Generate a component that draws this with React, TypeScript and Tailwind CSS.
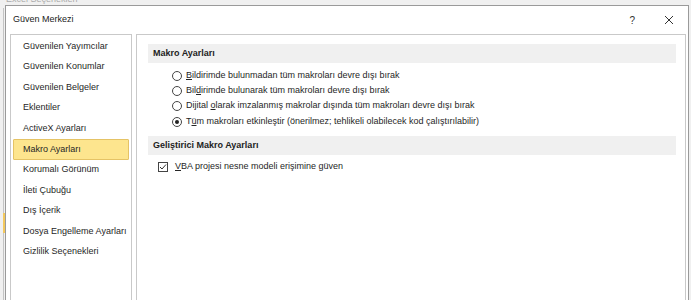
import React from "react";

const nav = [
  "Güvenilen Yayımcılar",
  "Güvenilen Konumlar",
  "Güvenilen Belgeler",
  "Eklentiler",
  "ActiveX Ayarları",
  "Makro Ayarları",
  "Korumalı Görünüm",
  "İleti Çubuğu",
  "Dış İçerik",
  "Dosya Engelleme Ayarları",
  "Gizlilik Seçenekleri",
];

type Opt = { pre: string; u: string; post: string; checked?: boolean };

const options: Opt[] = [
  { pre: "", u: "B", post: "ildirimde bulunmadan tüm makroları devre dışı bırak" },
  { pre: "Bil", u: "d", post: "irimde bulunarak tüm makroları devre dışı bırak" },
  { pre: "Dijital ", u: "o", post: "larak imzalanmış makrolar dışında tüm makroları devre dışı bırak" },
  {
    pre: "T",
    u: "ü",
    post: "m makroları etkinleştir (önerilmez; tehlikeli olabilecek kod çalıştırılabilir)",
    checked: true,
  },
];

function Radio({ checked }: { checked?: boolean }) {
  return (
    <span className="flex h-[10px] w-[10px] shrink-0 items-center justify-center rounded-full border border-[#444] bg-white">
      {checked && <span className="h-[4px] w-[4px] rounded-full bg-[#222]" />}
    </span>
  );
}

export default function App() {
  return (
    <div className="relative h-[300px] w-[691px] overflow-hidden bg-[#f0f0f0] font-['Liberation_Sans',Arial,sans-serif] text-[9px] text-[#262626]">
      {/* window behind */}
      <div className="absolute left-[6px] top-[-6px] text-[9px] leading-[10px] text-[#aaa]">Excel Seçenekleri</div>
      <div className="absolute left-[3px] top-[8px] h-[300px] w-px bg-[#c4c4c4]" />
      <div className="absolute left-[3px] top-[213px] h-[20px] w-[3px] bg-[#f4c95d]" />

      <div className="absolute left-[5px] top-[5px] flex h-[310px] w-[684px] flex-col border border-[#9a9a9a] bg-white">
        <div className="flex h-[28px] items-center pl-[7px] pr-[8px]">
          <span className="text-[9px] text-[#222]">Güven Merkezi</span>
          <span className="ml-auto mr-[29px] text-[10px] text-[#333]">?</span>
          <svg width="10" height="10" viewBox="0 0 10 10" className="mr-[6px]">
            <path d="M1 1 L9 9 M9 1 L1 9" stroke="#333" strokeWidth="1" />
          </svg>
        </div>
        <div className="flex flex-1 gap-[4px] pl-[4px] pr-[2px]">
          <div className="w-[122px] border border-[#c9c9c9] pt-[1px]">
            <div className="flex flex-col px-[2px]">
              {nav.map((n) => (
                <div
                  key={n}
                  className={
                    n === "Makro Ayarları"
                      ? "flex h-[20.6px] items-center rounded-[1px] border border-[#e5c365] bg-[#fde58e] pl-[9px] whitespace-nowrap"
                      : "flex h-[20.6px] items-center border border-transparent pl-[9px] whitespace-nowrap"
                  }
                >
                  {n}
                </div>
              ))}
            </div>
          </div>
          <div className="flex-1 border border-[#c9c9c9] pl-[11px] pr-[9px] pt-[9px]">
            <div className="flex h-[19px] items-center bg-[#f0f0f0] pl-[5px] font-bold text-[#222]">Makro Ayarları</div>
            <div className="mt-[5px] flex flex-col pl-[24px]">
              {options.map((o) => (
                <div key={o.post} className="flex h-[15.3px] items-center gap-[4px] whitespace-nowrap">
                  <Radio checked={o.checked} />
                  <span>
                    {o.pre}
                    <span className="underline">{o.u}</span>
                    {o.post}
                  </span>
                </div>
              ))}
            </div>
            <div className="mt-[7px] flex h-[19px] items-center bg-[#f0f0f0] pl-[5px] font-bold text-[#222]">
              Geliştirici Makro Ayarları
            </div>
            <div className="mt-[5px] flex items-center gap-[7px] pl-[10px] whitespace-nowrap">
              <svg width="10" height="10" viewBox="0 0 10 10">
                <rect x="0.5" y="0.5" width="9" height="9" fill="white" stroke="#444" />
                <path d="M2 5 L4 7 L8 2.5" fill="none" stroke="#333" strokeWidth="1" />
              </svg>
              <span>
                <span className="underline">V</span>BA projesi nesne modeli erişimine güven
              </span>
            </div>
          </div>
        </div>
      </div>
    </div>
  );
}
